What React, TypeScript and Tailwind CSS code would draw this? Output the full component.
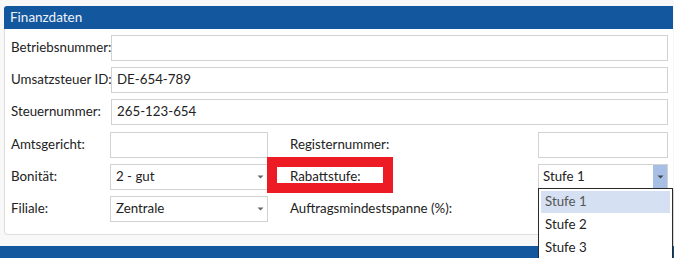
import React from "react";

const Arrow = ({ color = "#666" }: { color?: string }) => (
  <svg width="7" height="4" viewBox="0 0 7 4" className="block">
    <path d="M0.5 0.5 L6.5 0.5 L3.5 3.5 Z" fill={color} />
  </svg>
);

const Input = ({ value = "", className = "" }: { value?: string; className?: string }) => (
  <div className={`h-[26px] border border-[#d2d2d2] bg-white pl-[5px] flex items-center leading-none ${className}`}>
    {value}
  </div>
);

const Select = ({ value, className = "" }: { value: string; className?: string }) => (
  <div className={`h-[26px] border border-[#d2d2d2] bg-white pl-[5px] flex items-center justify-between ${className}`}>
    <span>{value}</span>
    <span className="w-[14px] h-full flex items-center justify-center">
      <Arrow />
    </span>
  </div>
);

export default function App() {
  return (
    <div className="w-[674px] h-[258px] bg-[#f8f8f8] overflow-hidden relative font-['Lato',sans-serif] text-[13.3px] text-[#222] whitespace-nowrap">
      <div className="pt-[6px] pl-[4px] pr-[1px]">
        <div className="relative">
          <div className="h-[23px] bg-[#13579e] rounded-tl-[3px] text-[#eef2f8] pl-[6px] leading-[23px] text-[13.5px]">
            Finanzdaten
          </div>
          <div className="bg-white border-l border-b border-[#dedede] rounded-bl-[4px] pl-[6px] pr-[5px] pt-[6px] pb-[12px] flex flex-col gap-[6px]">
            <div className="h-[26px] grid grid-cols-[100px_1fr] items-center">
              <span>Betriebsnummer:</span>
              <Input />
            </div>
            <div className="h-[26px] grid grid-cols-[100px_1fr] items-center">
              <span>Umsatzsteuer ID:</span>
              <Input value="DE-654-789" />
            </div>
            <div className="h-[26px] grid grid-cols-[100px_1fr] items-center">
              <span>Steuernummer:</span>
              <Input value="265-123-654" />
            </div>
            <div className="h-[26px] mt-[1px] grid grid-cols-[99px_158px_1fr_130px] items-center">
              <span>Amtsgericht:</span>
              <Input />
              <span className="pl-[22px]">Registernummer:</span>
              <Input />
            </div>
            <div className="h-[26px] grid grid-cols-[99px_158px_1fr_130px] items-center">
              <span>Bonität:</span>
              <Select value="2 - gut" />
              <span className="pl-[22px]">Rabattstufe:</span>
              <div className="h-[26px] border border-[#d2d2d2] bg-white pl-[4px] flex items-center justify-between">
                <span>Stufe 1</span>
                <span className="w-[14px] h-full bg-[#a7bfe4] flex items-center justify-center">
                  <Arrow color="#444" />
                </span>
              </div>
            </div>
            <div className="h-[26px] grid grid-cols-[99px_158px_1fr_130px] items-center">
              <span>Filiale:</span>
              <Select value="Zentrale" />
              <span className="pl-[22px]">Auftragsmindestspanne (%):</span>
              <span></span>
            </div>
          </div>

          <div className="absolute left-[263px] top-[151px] w-[126px] h-[36px] border-[10px] border-[#ed1c24]"></div>

          <div className="absolute left-[534px] top-[182px] w-[135px] h-[90px] bg-white border border-[#2b2b2b] p-[2px] shadow-[1px_1px_2px_rgba(0,0,0,0.2)]">
            <div className="h-[22px] bg-[#d5e1f2] pl-[4px] flex items-center text-[#555]">Stufe 1</div>
            <div className="h-[23px] pl-[4px] flex items-center">Stufe 2</div>
            <div className="h-[23px] pl-[4px] flex items-center">Stufe 3</div>
          </div>
        </div>
      </div>
      <div className="mt-[11px] h-[12px] bg-[#13579e] text-white text-[12px] leading-[12px] pl-[0px] pt-[8px]">
        <span className="block -ml-[2px]">er</span>
      </div>
    </div>
  );
}
